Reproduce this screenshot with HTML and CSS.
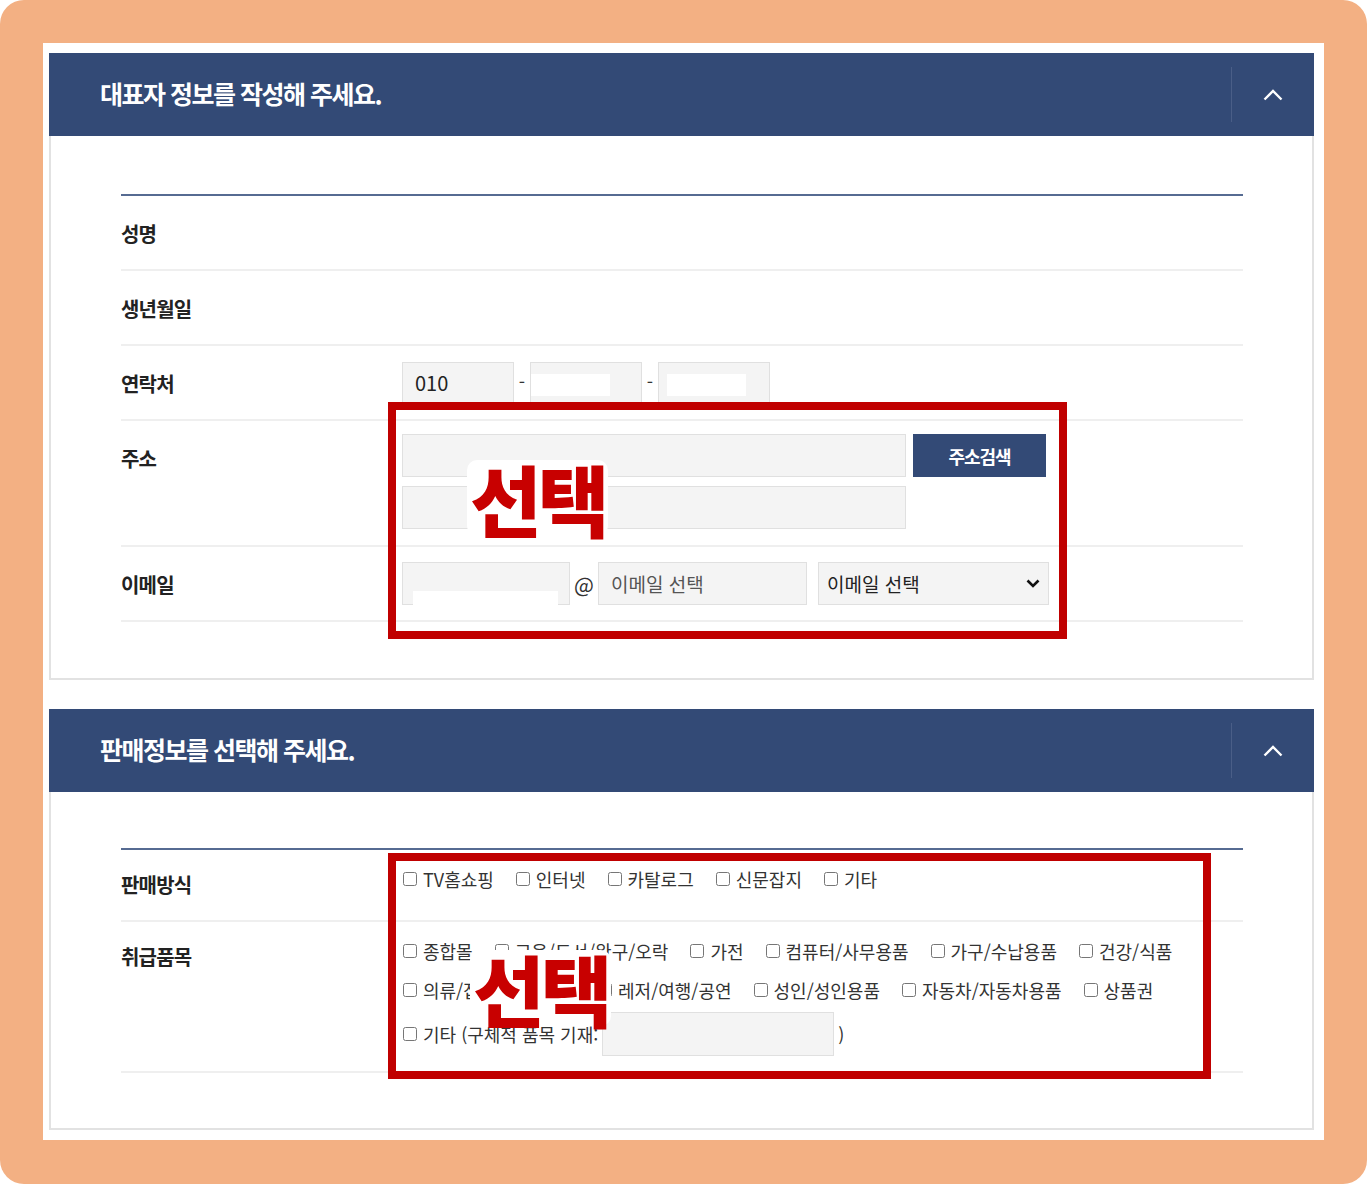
FILE: index.html
```html
<!DOCTYPE html>
<html lang="ko">
<head>
    <meta charset="UTF-8">
    <meta name="viewport" content="width=device-width, initial-scale=1.0">
    <title>대표자 정보</title>
    <link rel="stylesheet" href="styles.css">
</head>
<body>
<div class="frame">
    <div class="sheet">
        <section class="panel">
            <header class="panel-head">
                <h2>대표자 정보를 작성해 주세요.</h2>
                <button class="toggle" type="button">
                    <svg width="20" height="12" viewBox="0 0 20 12"><polyline points="1.5,10.5 10,2 18.5,10.5" fill="none" stroke="#fff" stroke-width="2.4"/></svg>
                </button>
            </header>
            <div class="panel-body">
                <div class="form-table">
                    <div class="row">
                        <div class="th">성명</div>
                        <div class="td"></div>
                    </div>
                    <div class="row">
                        <div class="th">생년월일</div>
                        <div class="td"></div>
                    </div>
                    <div class="row">
                        <div class="th">연락처</div>
                        <div class="td">
                            <div class="field phone">010</div>
                            <span class="dash">-</span>
                            <div class="field phone phone-mid"><span class="redact"></span></div>
                            <span class="dash">-</span>
                            <div class="field phone phone-end"><span class="redact"></span></div>
                        </div>
                    </div>
                    <div class="row">
                        <div class="th">주소</div>
                        <div class="td address">
                            <div class="addr-line">
                                <div class="field addr"></div>
                                <button class="btn-search" type="button">주소검색</button>
                            </div>
                            <div class="addr-line">
                                <div class="field addr"></div>
                            </div>
                        </div>
                    </div>
                    <div class="row">
                        <div class="th">이메일</div>
                        <div class="td">
                            <div class="field mail-id"><span class="redact-low"></span></div>
                            <span class="at">@</span>
                            <div class="field mail-domain placeholder">이메일 선택</div>
                            <div class="field mail-select">
                                <span>이메일 선택</span>
                                <svg width="14" height="9" viewBox="0 0 14 9"><polyline points="1.5,1.5 7,7 12.5,1.5" fill="none" stroke="#111" stroke-width="2.6"/></svg>
                            </div>
                        </div>
                    </div>
                </div>
            </div>
        </section>

        <section class="panel">
            <header class="panel-head">
                <h2>판매정보를 선택해 주세요.</h2>
                <button class="toggle" type="button">
                    <svg width="20" height="12" viewBox="0 0 20 12"><polyline points="1.5,10.5 10,2 18.5,10.5" fill="none" stroke="#fff" stroke-width="2.4"/></svg>
                </button>
            </header>
            <div class="panel-body sale-body">
                <div class="form-table sale">
                    <div class="row">
                        <div class="th">판매방식</div>
                        <div class="td checks">
                            <div class="check-line">
                                <label><input type="checkbox">TV홈쇼핑</label>
                                <label><input type="checkbox">인터넷</label>
                                <label><input type="checkbox">카탈로그</label>
                                <label><input type="checkbox">신문잡지</label>
                                <label><input type="checkbox">기타</label>
                            </div>
                        </div>
                    </div>
                    <div class="row">
                        <div class="th">취급품목</div>
                        <div class="td checks">
                            <div class="check-line">
                                <label><input type="checkbox">종합몰</label>
                                <label><input type="checkbox">교육/도서/완구/오락</label>
                                <label><input type="checkbox">가전</label>
                                <label><input type="checkbox">컴퓨터/사무용품</label>
                                <label><input type="checkbox">가구/수납용품</label>
                                <label><input type="checkbox">건강/식품</label>
                            </div>
                            <div class="check-line">
                                <label><input type="checkbox">의류/잡화</label>
                                <label class="tight"><input type="checkbox">스포츠</label>
                                <label><input type="checkbox">레저/여행/공연</label>
                                <label><input type="checkbox">성인/성인용품</label>
                                <label><input type="checkbox">자동차/자동차용품</label>
                                <label><input type="checkbox">상품권</label>
                            </div>
                            <div class="check-line etc">
                                <label><input type="checkbox">기타 (구체적 품목 기재:</label>
                                <div class="field etc-input"></div>
                                <span class="paren">)</span>
                            </div>
                        </div>
                    </div>
                </div>
            </div>
        </section>

        <!-- annotation boxes over the form -->
        <div class="mark mark-owner"><span class="mark-label">선택</span></div>
        <div class="mark mark-sale"><span class="mark-label">선택</span></div>
    </div>
</div>
</body>
</html>
```

FILE: styles.css
```css
*{
    box-sizing: border-box;
}
body{
    margin: 0;
    background: #fff;
    font-family: "Noto Sans CJK KR", "Noto Sans", sans-serif;
    color: #222;
}
.frame{
    width: 1367px;
    height: 1184px;
    background: #f3b083;
    border-radius: 24px;
    padding: 43px 43px 44px;
}
.sheet{
    position: relative;
    height: 100%;
    background: #fff;
    padding: 10px 10px 0 6px;
}
.panel{
    margin-bottom: 29px;
}
.panel-head{
    display: flex;
    align-items: center;
    height: 83px;
    background: #334a76;
    padding-left: 51px;
}
.panel-head h2{
    flex: 1;
    margin: 0 0 3px;
    color: #fff;
    font-size: 25px;
    font-weight: 700;
    letter-spacing: -1.5px;
}
.toggle{
    width: 83px;
    height: 55px;
    padding: 0;
    border: 0;
    border-left: 1px solid #4a5e87;
    background: none;
    display: flex;
    align-items: center;
    justify-content: center;
}
.panel-body{
    border: 2px solid #e2e2e2;
    border-top: 0;
    padding: 58px 69px 56px 70px;
}
.sale-body{
    padding-top: 56px;
    padding-bottom: 55px;
}
.form-table{
    border-top: 2px solid #566b92;
}
.row{
    display: flex;
    min-height: 75px;
    border-bottom: 2px solid #efefef;
}
.th{
    width: 281px;
    flex: none;
    padding-top: 27px;
    font-size: 20px;
    font-weight: 700;
    line-height: 22px;
    letter-spacing: -0.8px;
    color: #222;
}
.td{
    flex: 1;
    display: flex;
    align-items: center;
}

/* input boxes */
.field{
    height: 43px;
    background: #f4f4f4;
    border: 1px solid #e0e0e0;
    display: flex;
    align-items: center;
    padding: 0 12px;
    font-size: 19px;
    color: #222;
}
.phone{
    width: 112px;
    height: 42px;
    font-size: 20px;
}
.phone-mid{
    padding: 0;
}
.phone-end{
    padding-left: 8px;
}
.redact{
    width: 79px;
    height: 22px;
    background: #fff;
    margin-top: 4px;
}
.dash{
    width: 16px;
    text-align: center;
    font-size: 18px;
    color: #333;
    margin-top: -4px;
}
.address{
    flex-direction: column;
    align-items: flex-start;
    gap: 9px;
    padding: 13px 0 16px;
}
.addr-line{
    display: flex;
    gap: 7px;
}
.addr{
    width: 504px;
}
.btn-search{
    width: 133px;
    height: 43px;
    border: 0;
    background: #334a76;
    color: #fff;
    font-family: inherit;
    font-size: 18px;
    font-weight: 700;
    letter-spacing: -1px;
}
.mail-id{
    width: 168px;
    position: relative;
}
.redact-low{
    position: absolute;
    left: 10px;
    bottom: -1px;
    width: 145px;
    height: 14px;
    background: #fff;
}
.at{
    width: 28px;
    text-align: center;
    font-size: 21px;
    color: #333;
}
.mail-domain{
    width: 209px;
    margin-right: 11px;
}
.placeholder{
    color: #555;
}
.mail-select{
    width: 231px;
    padding: 0 8px;
    justify-content: space-between;
}

/* checkbox rows */
.sale .row{
    min-height: 72px;
}
.sale .th{
    padding-top: 24px;
}
.checks{
    flex-direction: column;
    align-items: flex-start;
    padding: 17px 0 15px;
}
.check-line{
    display: flex;
    align-items: center;
    gap: 21px;
    height: 24px;
    margin-bottom: 15px;
}
.check-line:last-child{
    margin-bottom: 0;
}
.check-line label{
    display: flex;
    align-items: center;
    font-size: 18px;
    color: #333;
    white-space: nowrap;
}
.check-line label.tight{
    letter-spacing: -4px;
}
.check-line input{
    width: 14px;
    height: 14px;
    margin: 0 6px 0 1px;
}
.check-line.etc{
    height: 44px;
    gap: 4px;
    margin-top: -5px;
}
.etc-input{
    width: 232px;
    height: 44px;
}
.paren{
    font-size: 18px;
    color: #333;
}

/* red annotation boxes */
.mark{
    position: absolute;
    border: 8px solid #c00000;
}
.mark-owner{
    left: 345px;
    top: 359px;
    width: 679px;
    height: 237px;
}
.mark-sale{
    left: 345px;
    top: 810px;
    width: 823px;
    height: 226px;
}
.mark-label{
    position: absolute;
    background: #fff;
    border-radius: 10px;
    padding: 0 2px 0 3px;
    color: #c80000;
    font-size: 78px;
    font-weight: 900;
    line-height: 76px;
    letter-spacing: -4px;
}
.mark-owner .mark-label{
    left: 71px;
    top: 50px;
}
.mark-sale .mark-label{
    left: 74px;
    top: 89px;
}
```
